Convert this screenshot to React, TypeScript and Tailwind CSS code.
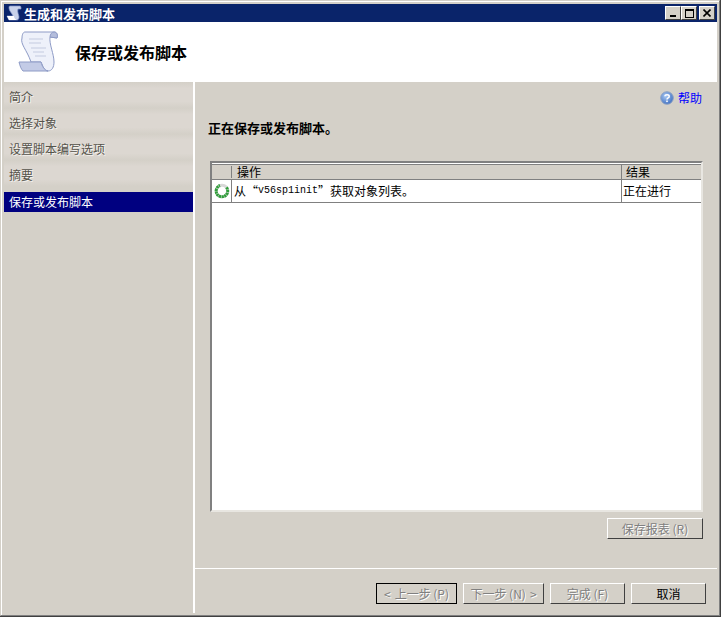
import React from "react";

const cjk = "font-['Noto_Sans_CJK_SC','Liberation_Sans',sans-serif]";

function Scroll() {
  return (
    <svg width="42" height="44" viewBox="0 0 42 44" className="block">
      <path d="M8 2 H37 C40 2 41 5 40 8 L33 7 C32 14 37 24 37 32 C37 37 35 41 31 41 C27 41 26 36 24 32 H14 C10 20 3 14 5 8 C5 5 6 2 8 2 Z" fill="#eef1fa" stroke="#8e9bc6" />
      <path d="M2 32 H24 C25 36 27 40 31 41 H6 C4 39 3 36 2 32 Z" fill="#c3cbe6" stroke="#8e9bc6" />
      <path d="M33 7 C33 4 35 2 37 2 C40 2 41 5 40 8 Z" fill="#b4bddc" stroke="#8e9bc6" />
      <path d="M12 9 H26 M12 13 H24 M14 18 H29 M16 22 H27 M18 26 H29" stroke="#c4cbe0" strokeWidth="1" />
    </svg>
  );
}

function TitleIcon() {
  return (
    <svg width="16" height="16" viewBox="0 0 16 16" className="block">
      <path d="M4 1 H14 C15 1 15 3 15 4 H12 C11 7 13 10 13 12 C13 14 12 15 11 15 H3 L1 11 H7 C6 8 3 6 3 3 C3 2 3 1 4 1 Z" fill="#c9d2ea" stroke="#8496c8" strokeWidth="0.7" />
      <path d="M1 11 H8 C8 13 9 14 11 15 H3 Z" fill="#fff" />
    </svg>
  );
}

function HelpIcon() {
  return (
    <svg width="14" height="14" viewBox="0 0 14 14" className="block">
      <defs>
        <radialGradient id="hg" cx="0.4" cy="0.35" r="0.8">
          <stop offset="0" stopColor="#a9c8f2" />
          <stop offset="1" stopColor="#2c5fb8" />
        </radialGradient>
      </defs>
      <circle cx="7" cy="7" r="6.3" fill="url(#hg)" stroke="#8fa3c4" />
      <path d="M4.8 5.3 C5 3.3 9.2 3.3 9.2 5.4 C9.2 7 7 6.8 7 8.5" stroke="#fff" strokeWidth="1.5" fill="none" />
      <rect x="6.2" y="9.5" width="1.6" height="1.6" fill="#fff" />
    </svg>
  );
}

function Spinner() {
  return (
    <svg width="16" height="16" viewBox="0 0 16 16" className="block">
      <circle cx="8" cy="8" r="5.8" fill="none" stroke="#d8d8d8" strokeWidth="3" />
      <path d="M12.5 4.4 A5.8 5.8 0 1 1 6 2.5" fill="none" stroke="#2f9e3a" strokeWidth="3" strokeDasharray="2.2 0.5" />
    </svg>
  );
}

function WinBtn({ children }: { children: React.ReactNode }) {
  return (
    <div className="w-4 h-[14px] bg-[#d4d0c8] border border-t-white border-l-white border-r-[#404040] border-b-[#404040] flex items-center justify-center">
      {children}
    </div>
  );
}

function Btn({ w, label, disabled, focus }: { w: string; label: React.ReactNode; disabled?: boolean; focus?: boolean }) {
  const base =
    "h-[21px] flex items-center justify-center whitespace-nowrap text-xs leading-none bg-[#d4d0c8] border border-t-white border-l-white border-r-[#404040] border-b-[#404040] ";
  const color = disabled ? "text-[#808080] [text-shadow:1px_1px_0_#fff] " : "text-black ";
  const ring = focus ? "outline outline-1 -outline-offset-1 outline-black " : "";
  return <div className={base + color + ring + w}>{label}</div>;
}

const items = ["简介", "选择对象", "设置脚本编写选项", "摘要"];

export default function App() {
  return (
    <div className={`w-[721px] h-[617px] bg-[#d4d0c8] border-r border-b border-r-[#404040] border-b-[#404040] ${cjk} text-xs`}>
      <div className="border-t border-l border-t-[#d4d0c8] border-l-[#d4d0c8] border-r border-b border-r-[#808080] border-b-[#808080] h-full">
        <div className="h-full border-t border-l border-t-white border-l-white p-[2px] flex flex-col">
          <div className="h-[18px] shrink-0 bg-[#0a246a] flex items-center pl-[2px] pr-[2px]">
            <TitleIcon />
            <span className="ml-[2px] text-white font-bold text-[13px] leading-none">生成和发布脚本</span>
            <div className="ml-auto flex items-center">
              <WinBtn>
                <div className="w-[6px] h-[2px] bg-black mt-[6px] mr-[1px]" />
              </WinBtn>
              <WinBtn>
                <div className="w-[9px] h-[9px] border border-black border-t-2" />
              </WinBtn>
              <div className="w-[2px]" />
              <WinBtn>
                <svg width="8" height="8" viewBox="0 0 8 8">
                  <path d="M0.5 0.5 L7.5 7.5 M7.5 0.5 L0.5 7.5" stroke="#000" strokeWidth="1.6" />
                </svg>
              </WinBtn>
            </div>
          </div>
          <div className="h-[60px] shrink-0 bg-white flex items-center pl-[13px]">
            <Scroll />
            <span className="ml-[16px] text-base font-bold text-black leading-none">保存或发布脚本</span>
          </div>
          <div className="flex-1 flex min-h-0">
            <div className="w-[189px] shrink-0 flex flex-col">
              {items.map((t) => (
                <div
                  key={t}
                  className="h-[26px] pt-[4px] bg-[linear-gradient(#d4d0c8,#dcd7d1_25%,#dcd7d1_75%,#d4d0c8)] flex items-center pl-[5px] text-[#55534b] [text-shadow:1px_1px_0_#f4f2ee] leading-none"
                >
                  {t}
                </div>
              ))}
              <div className="mt-[6px] h-5 pb-[1px] bg-[#000080] flex items-center pl-[5px] text-white leading-none">保存或发布脚本</div>
            </div>
            <div className="w-[2px] shrink-0 bg-white" />
            <div className="flex-1 flex flex-col min-w-0">
              <div className="h-[30px] shrink-0 flex items-center justify-end gap-[4px] pr-[15px] pt-[1px] text-[#0000ff] leading-none">
                <HelpIcon />
                <span>帮助</span>
              </div>
              <div className="h-[30px] shrink-0 flex items-center pl-[13px] text-[13px] font-bold text-black leading-none">
                正在保存或发布脚本。
              </div>
              <div className="mt-[19px] ml-[15px] mr-[14px] h-[351px] shrink-0 border-2 border-t-[#808080] border-l-[#808080] border-r-[#e8e6e1] border-b-[#e8e6e1] bg-white pt-[2px]">
                <div className="border-t border-t-[#808080] -mt-[1px]" />
                <div className="flex h-[15px] bg-[#d4d0c8] border-b border-b-[#808080] leading-none text-black">
                  <div className="w-[20px] shrink-0 border-r border-r-[#808080] h-[12px] mt-[1px]" />
                  <div className="flex-1 pl-[5px] flex items-center">操作</div>
                  <div className="w-[80px] shrink-0 border-l border-l-[#808080] pl-[4px] flex items-center">结果</div>
                </div>
                <div className="flex h-[23px] border-b border-b-[#808080] text-black leading-none">
                  <div className="w-[20px] shrink-0 border-r border-r-[#808080] flex items-center justify-center">
                    <Spinner />
                  </div>
                  <div className="flex-1 pl-[2px] flex items-center whitespace-nowrap">
                    从“<span className="font-['Liberation_Mono',monospace] text-[10px]">v56sp1init</span>”获取对象列表。
                  </div>
                  <div className="w-[80px] shrink-0 border-l border-l-[#808080] pl-[1px] flex items-center">正在进行</div>
                </div>
              </div>
              <div className="mt-[6px] mr-[14px] flex justify-end shrink-0">
                <Btn w="w-[96px]" disabled label="保存报表 (R)" />
              </div>
              <div className="mt-[29px] border-t border-t-white shrink-0" />
              <div className="mt-[14px] pr-[11px] flex justify-end gap-[6px] shrink-0">
                <Btn w="w-[81px]" disabled focus label={<><span className="mr-[4px]">&lt;</span>上一步 (P)</>} />
                <Btn w="w-[81px]" disabled label={<>下一步 (N)<span className="ml-[4px]">&gt;</span></>} />
                <Btn w="w-[75px]" disabled label="完成 (F)" />
                <Btn w="w-[75px]" label="取消" />
              </div>
            </div>
          </div>
        </div>
      </div>
    </div>
  );
}
